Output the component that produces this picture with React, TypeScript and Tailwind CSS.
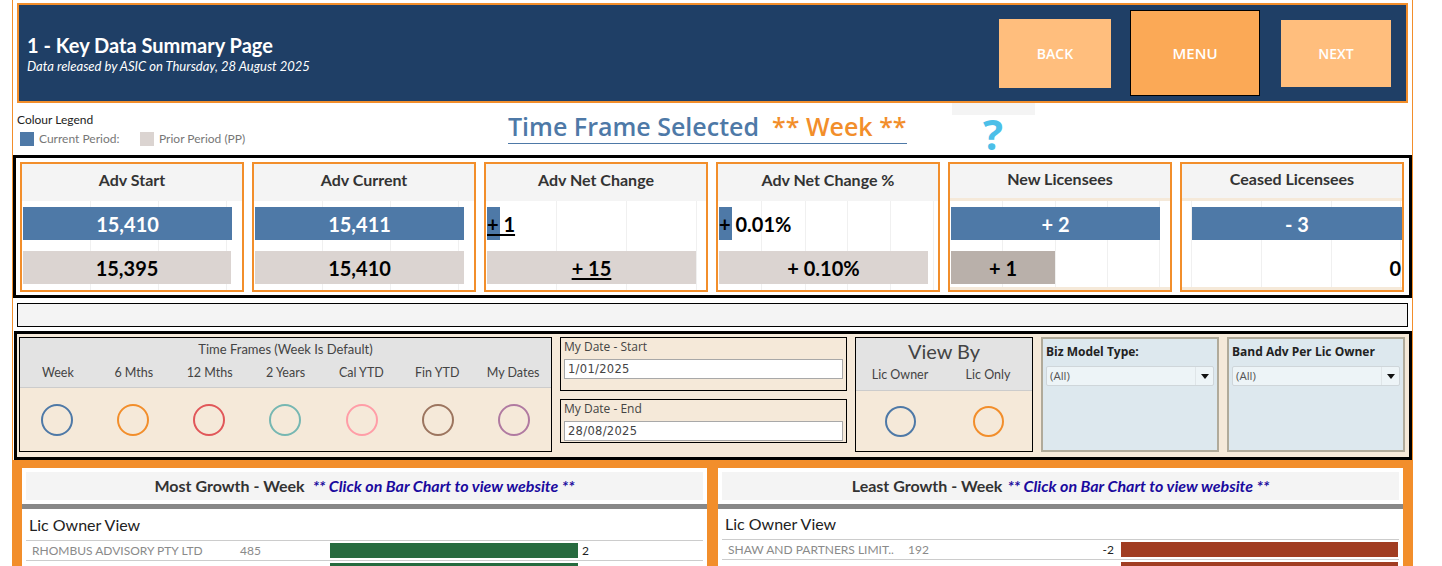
const BLUE = "#4e79a7";
const BEIGE = "#dbd4d1";

type Bar = { left: number; width: number; color: string; text: string; light?: boolean; under?: boolean; mode?: "center" | "start" | "end"; h?: number; top?: number };
type CardProps = { title: string; grid: number[]; bars: Bar[]; trim?: boolean };

function Card({ title, grid, bars, trim }: CardProps) {
  return (
    <div className="w-[224px] h-[130px] border-2 border-[#f28e2b] bg-white flex flex-col overflow-hidden">
      <div className={`h-[37px] shrink-0 bg-[#f4f4f4] flex items-center justify-center pb-[5px] text-[16px] font-bold text-[#333333] ${trim ? "border-b-[3px] border-[#f5e9d9]" : ""}`}>
        {title}
      </div>
      <div className="relative flex-1">
        {grid.map((g) => (
          <div key={g} className="absolute top-0 bottom-0 w-px bg-[#f0f0f0]" style={{ left: g }} />
        ))}
        {trim && <div className="absolute left-0 right-0 bottom-0 h-[3px] bg-[#f5e9d9]" />}
        <div className="relative flex flex-col pt-[6px] gap-[11px]">
          {bars.map((b) => (
            <div
              key={b.text}
              className={`relative h-[33px] flex items-center text-[20px] font-bold whitespace-nowrap ${b.light ? "text-white" : "text-black"} ${b.mode === "start" ? "justify-start" : b.mode === "end" ? "justify-end" : "justify-center"}`}
              style={{ marginLeft: b.left, width: b.width, backgroundColor: b.color }}
            >
              <span className={b.under ? "underline decoration-2 underline-offset-2" : ""}>{b.text}</span>
            </div>
          ))}
        </div>
      </div>
    </div>
  );
}

function Ring({ color, size = 32 }: { color: string; size?: number }) {
  return <div className="rounded-full border-2 shrink-0" style={{ width: size, height: size, borderColor: color }} />;
}

const frames = [
  ["Week", "#4e79a7"],
  ["6 Mths", "#f28e2b"],
  ["12 Mths", "#e15759"],
  ["2 Years", "#76b7b2"],
  ["Cal YTD", "#ff9da7"],
  ["Fin YTD", "#9c755f"],
  ["My Dates", "#b07aa1"],
];

function DateBox({ label, value, h }: { label: string; value: string; h: string }) {
  return (
    <div className={`${h} border border-black px-[3px]`}>
      <div className="text-[12px] leading-[18px] text-[#444444]" style={{ fontFamily: "'Open Sans', sans-serif" }}>{label}</div>
      <div className="mt-[3px] h-[20px] border border-[#a8a8a8] bg-white pl-[3px] text-[11.5px] leading-[18px] text-[#444444] tracking-[0.3px]" style={{ fontFamily: "'DejaVu Sans', sans-serif" }}>
        {value}
      </div>
    </div>
  );
}

function Filter({ title }: { title: string }) {
  return (
    <div className="w-[178px] h-[115px] border-[2px] border-[#b0aa9a] bg-[#dde8ee] px-[3px] pt-[4px]">
      <div className="text-[12px] leading-[18px] font-bold text-[#222222]" style={{ fontFamily: "'Open Sans', sans-serif" }}>{title}</div>
      <div className="mt-[5px] h-[20px] border border-[#cfd6da] rounded-[2px] bg-[#edf4f7] flex items-center justify-between">
        <span className="pl-[3px] text-[11.5px] text-[#555555]" style={{ fontFamily: "'Open Sans', sans-serif" }}>(All)</span>
        <span className="w-[18px] h-full border-l border-[#dfe5e8] flex items-center justify-center">
          <svg width="8" height="5" viewBox="0 0 8 5"><path d="M0 0h8L4 5z" fill="#111111" /></svg>
        </span>
      </div>
    </div>
  );
}

function Panel({ head, width, linkGap, children }: { head: string; width: string; linkGap: string; children: React.ReactNode }) {
  return (
    <div className={`${width} h-[120px] border border-[#f28e2b] bg-white px-[4px] pt-[4px] shrink-0 overflow-hidden`}>
      <div className="h-[28px] bg-[#f4f4f4] flex items-center justify-center text-[16px] font-bold text-[#333333]">
        {head}
        <span className={`${linkGap} italic text-[#1a0a9e]`}>** Click on Bar Chart to view website **</span>
      </div>
      <div className="-mx-[4px] mt-[4px] h-[5px] bg-[#888888]" />
      {children}
    </div>
  );
}

export default function App() {
  return (
    <div className="h-[566px] w-[1442px] overflow-hidden bg-white" style={{ fontFamily: "Lato, sans-serif" }}>
      <div className="ml-[12px] w-[1401px] h-full border-x border-[#f28e2b] flex flex-col pt-[3px]">
        {/* Header */}
        <div className="mx-[4px] h-[100px] shrink-0 border-2 border-[#f28e2b] bg-[#1f3f66] flex items-center justify-between text-white">
          <div className="pl-[8px]">
            <div className="text-[20px] leading-[26px] font-bold" style={{ fontFamily: "Lato, sans-serif" }}>1 - Key Data Summary Page</div>
            <div className="text-[13px] leading-[16px] italic">Data released by ASIC on Thursday, 28 August 2025</div>
          </div>
          <div className="flex items-center pr-[15px]">
            <div className="w-[112px] h-[69px] bg-[#ffbe7d] flex items-center justify-center text-[14px] font-semibold" style={{ fontFamily: "'Open Sans', sans-serif" }}>BACK</div>
            <div className="ml-[19px] w-[130px] h-[86px] bg-[#fba956] border border-black flex items-center justify-center text-[15px] font-semibold" style={{ fontFamily: "'Open Sans', sans-serif" }}>MENU</div>
            <div className="ml-[21px] w-[110px] h-[67px] bg-[#ffbe7d] flex items-center justify-center text-[14px] font-semibold" style={{ fontFamily: "'Open Sans', sans-serif" }}>NEXT</div>
          </div>
        </div>

        {/* Legend + title */}
        <div className="h-[52px] shrink-0 flex">
          <div className="w-[495px] pl-[4px] pt-[9px] shrink-0">
            <div className="text-[12px] leading-[15px] text-[#222222]">Colour Legend</div>
            <div className="mt-[5px] ml-[3px] flex items-center text-[12px] leading-[14px] text-[#777777]">
              <span className="w-[14px] h-[14px] bg-[#4e79a7]" />
              <span className="ml-[5px] w-[101px]">Current Period:</span>
              <span className="w-[14px] h-[14px] bg-[#dbd4d1]" />
              <span className="ml-[5px]">Prior Period (PP)</span>
            </div>
          </div>
          <div className="mt-[13px] h-[28px] border-b border-[#4e79a7] flex items-end text-[25px] leading-[34px] font-semibold whitespace-nowrap" style={{ fontFamily: "'Open Sans', sans-serif" }}>
            <span className="text-[#4e79a7]">Time Frame Selected&nbsp;</span>
            <span className="text-[#f28e2b]">&nbsp;** Week **</span>
          </div>
          <div className="ml-[45px] w-[83px] flex flex-col items-center">
            <div className="h-[12px] w-full bg-[#f4f4f4] shrink-0" />
            <div className="text-[42px] leading-[38px] font-bold text-[#4cbfe8]" style={{ fontFamily: "'Open Sans', sans-serif" }}>?</div>
          </div>
        </div>

        {/* KPI cards */}
        <div className="h-[143px] shrink-0 border-[3px] border-black flex gap-[8px] pl-[4px] pt-[4px]">
          <Card title="Adv Start" grid={[68, 136, 204]} bars={[
            { left: 1, width: 209, color: BLUE, text: "15,410", light: true },
            { left: 1, width: 208, color: BEIGE, text: "15,395" },
          ]} />
          <Card title="Adv Current" grid={[68, 136, 204]} bars={[
            { left: 1, width: 209, color: BLUE, text: "15,411", light: true },
            { left: 1, width: 209, color: BEIGE, text: "15,410" },
          ]} />
          <Card title="Adv Net Change" grid={[70, 140, 210]} bars={[
            { left: 1, width: 13, color: BLUE, text: "+ 1", mode: "start", under: true },
            { left: 1, width: 209, color: BEIGE, text: "+ 15", under: true },
          ]} />
          <Card title="Adv Net Change %" grid={[43, 87, 129, 172, 215]} bars={[
            { left: 1, width: 13, color: BLUE, text: "+ 0.01%", mode: "start" },
            { left: 1, width: 209, color: BEIGE, text: "+ 0.10%" },
          ]} />
          <Card trim title="New Licensees" grid={[52, 105, 157, 209]} bars={[
            { left: 1, width: 209, color: BLUE, text: "+ 2", light: true },
            { left: 1, width: 104, color: "#b9b0aa", text: "+ 1" },
          ]} />
          <Card trim title="Ceased Licensees" grid={[9, 79, 149, 218]} bars={[
            { left: 10, width: 210, color: BLUE, text: "- 3", light: true },
            { left: 10, width: 209, color: "transparent", text: "0", mode: "end" },
          ]} />
        </div>

        {/* Empty bar */}
        <div className="mx-[4px] mt-[5px] h-[24px] shrink-0 border border-black bg-[#f4f4f4]" />

        {/* Filters */}
        <div className="mt-[4px] ml-[1px] w-[1398px] h-[129px] shrink-0 border-[3px] border-black bg-[#f5e9d9] flex gap-[8px] pl-[2px] pt-[3px]">
          <div className="w-[533px] h-[115px] border border-black flex flex-col">
            <div className="h-[50px] bg-[#e3e3e3] border-b border-[#cccccc] text-center text-[#444444]">
              <div className="text-[13px] leading-[20px] pt-[1px]">Time Frames (Week Is Default)</div>
              <div className="grid grid-cols-7 text-[12.5px] leading-[18px] mt-[5px]">
                {frames.map(([n]) => <div key={n}>{n}</div>)}
              </div>
            </div>
            <div className="flex-1 grid grid-cols-7 gap-[3px]">
              {frames.map(([n, c]) => (
                <div key={n} className="bg-[#f5e9d9] flex items-center justify-center">
                  <Ring color={c} />
                </div>
              ))}
            </div>
          </div>

          <div className="w-[287px] flex flex-col gap-[8px]">
            <DateBox label="My Date - Start" value="1/01/2025" h="h-[54px]" />
            <DateBox label="My Date - End" value="28/08/2025" h="h-[44px]" />
          </div>

          <div className="w-[178px] h-[115px] border border-black flex flex-col">
            <div className="h-[53px] bg-[#e3e3e3] border-b border-[#cccccc] text-[#444444] text-center">
              <div className="text-[20px] leading-[26px]">View By</div>
              <div className="flex text-[12.5px] leading-[18px] mt-[2px]">
                <div className="w-[88px]">Lic Owner</div>
                <div className="w-[88px]">Lic Only</div>
              </div>
            </div>
            <div className="flex-1 flex items-center">
              <div className="w-[88px] flex justify-center"><Ring color="#4e79a7" size={31} /></div>
              <div className="w-[88px] flex justify-center"><Ring color="#f28e2b" size={31} /></div>
            </div>
          </div>

          <Filter title="Biz Model Type:" />
          <Filter title="Band Adv Per Lic Owner" />
        </div>

        {/* Lower charts */}
        <div className="flex-1 mt-0 bg-[#f28e2b] flex pl-[8px] pt-[7px] gap-[9px]">
          <Panel head="Most Growth - Week" width="w-[687px]" linkGap="ml-[8px]">
            <div className="pl-[3px] text-[16px] leading-[22px] mt-[1px] text-[#222222] h-[30px] flex items-center">Lic Owner View</div>
            <div className="border-t border-[#cccccc] h-[20px] flex items-center text-[12px] text-[#8a8a8a] relative">
              <span className="ml-[6px] w-[208px]">RHOMBUS ADVISORY PTY LTD</span>
              <span className="w-[90px]">485</span>
              <span className="w-[248px] h-[15px] bg-[#276b3f]" />
              <span className="ml-[4px] text-[#222222]">2</span>
            </div>
            <div className="border-t border-[#cccccc] pl-[304px] pt-[2px]">
              <div className="w-[248px] h-[15px] bg-[#276b3f]" />
            </div>
          </Panel>
          <Panel head="Least Growth - Week" width="w-[687px]" linkGap="ml-[5px]">
            <div className="pl-[3px] text-[16px] leading-[22px] text-[#222222] h-[30px] flex items-center">Lic Owner View</div>
            <div className="border-t border-[#cccccc] h-[20px] flex items-center text-[12px] text-[#8a8a8a]">
              <span className="ml-[6px] w-[180px] whitespace-nowrap">SHAW AND PARTNERS LIMIT..</span>
              <span className="w-[190px]">192</span>
              <span className="w-[16px] text-right text-[#222222]">-2</span>
              <span className="ml-[7px] w-[277px] h-[15px] bg-[#a13d22]" />
            </div>
            <div className="border-t border-[#cccccc] pl-[399px] pt-[2px]">
              <div className="w-[277px] h-[15px] bg-[#a13d22]" />
            </div>
          </Panel>
        </div>
      </div>
    </div>
  );
}
